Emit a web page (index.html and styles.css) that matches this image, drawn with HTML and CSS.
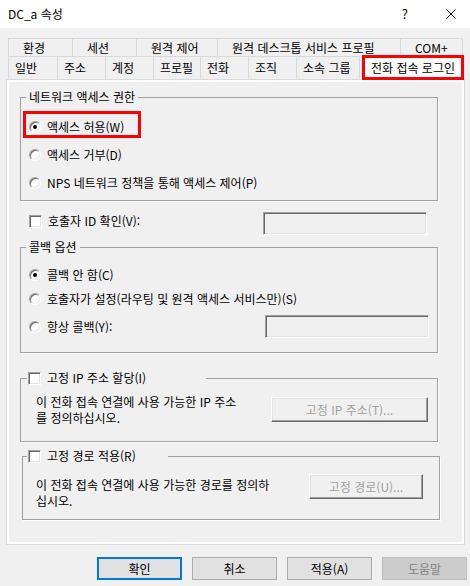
FILE: index.html
```html
<!DOCTYPE html>
<html lang="ko">
<head>
  <meta charset="UTF-8" />
  <title>DC_a 속성</title>
  <link rel="stylesheet" href="styles.css">
</head>
<body>
  <div class="window">
    <div class="titlebar">
      <span class="title">DC_a 속성</span>
      <span class="caption-help">?</span>
      <svg class="caption-close" viewBox="0 0 10 10" width="10" height="10">
        <path d="M0.5 0.5 L9.5 9.5 M9.5 0.5 L0.5 9.5" stroke="#000" stroke-width="1" fill="none"/>
      </svg>
    </div>

    <div class="tabs">
      <div class="tab-row row-back">
        <div class="tab">환경</div>
        <div class="tab">세션</div>
        <div class="tab">원격 제어</div>
        <div class="tab">원격 데스크톱 서비스 프로필</div>
        <div class="tab tab-last">COM+</div>
      </div>
      <div class="tab-row row-front">
        <div class="tab">일반</div>
        <div class="tab">주소</div>
        <div class="tab">계정</div>
        <div class="tab">프로필</div>
        <div class="tab">전화</div>
        <div class="tab">조직</div>
        <div class="tab tab-last">소속 그룹</div>
        <div class="tab tab-active">전화 접속 로그인</div>
      </div>
    </div>

    <div class="panel">
      <fieldset class="group group-access">
        <legend>네트워크 액세스 권한</legend>
        <div class="opt opt-marked"><span class="radio checked"></span>액세스 허용(W)</div>
        <div class="opt"><span class="radio"></span>액세스 거부(D)</div>
        <div class="opt"><span class="radio"></span>NPS 네트워크 정책을 통해 액세스 제어(P)</div>
      </fieldset>

      <div class="caller-row">
        <span class="caller-label"><span class="check"></span>호출자 ID 확인(V):</span>
        <span class="textbox"></span>
      </div>

      <fieldset class="group group-callback">
        <legend>콜백 옵션</legend>
        <div class="opt"><span class="radio checked"></span>콜백 안 함(C)</div>
        <div class="opt"><span class="radio"></span>호출자가 설정(라우팅 및 원격 액세스 서비스만)(S)</div>
        <div class="opt opt-box">
          <span class="opt-label"><span class="radio"></span>항상 콜백(Y):</span>
          <span class="textbox"></span>
        </div>
      </fieldset>

      <fieldset class="group group-ip">
        <legend><span class="check"></span>고정 IP 주소 할당(I)</legend>
        <div class="group-body">
          <p class="desc">이 전화 접속 연결에 사용 가능한 IP 주소<br>를 정의하십시오.</p>
          <button class="btn-classic" disabled>고정 IP 주소(T)...</button>
        </div>
      </fieldset>

      <fieldset class="group group-route">
        <legend><span class="check"></span>고정 경로 적용(R)</legend>
        <div class="group-body">
          <p class="desc">이 전화 접속 연결에 사용 가능한 경로를 정의하<br>십시오.</p>
          <button class="btn-classic" disabled>고정 경로(U)...</button>
        </div>
      </fieldset>
    </div>

    <div class="dialog-buttons">
      <button class="btn btn-default">확인</button>
      <button class="btn">취소</button>
      <button class="btn">적용(A)</button>
      <button class="btn btn-disabled" disabled>도움말</button>
    </div>
  </div>
</body>
</html>
```

FILE: styles.css
```css
body {
  margin: 0;
  background: #f0f0f0;
  font-family: "Noto Sans CJK KR", "Malgun Gothic", sans-serif;
  font-size: 12px;
  line-height: 16px;
  color: #000;
}

.window {
  width: 470px;
  height: 586px;
  overflow: hidden;
}

/* title bar */
.titlebar {
  height: 28px;
  background: #fff;
  display: flex;
  align-items: center;
  padding-left: 8px;
}

.title { flex: 1; }

.caption-help {
  font-size: 13px;
  margin-right: 38px;
}

.caption-close {
  display: block;
  margin-right: 14px;
}

/* tabs */
.tabs {
  margin: 10px 6px 0 8px;
}

.tab-row { display: grid; }

.row-back {
  height: 18px;
  grid-template-columns: 64px 64px 81px 183px 63px;
}

.row-front {
  height: 23px;
  grid-template-columns: 49px 48px 48px 47px 48px 48px 64px 104px;
  align-items: start;
}

.tab {
  box-sizing: border-box;
  border-top: 1px solid #d9d9d9;
  border-left: 1px solid #d9d9d9;
  white-space: nowrap;
}

.tab-last { border-right: 1px solid #d9d9d9; }

.row-back .tab {
  padding-left: 14px;
  line-height: 17px;
}

.row-front .tab {
  height: 23px;
  padding-left: 6px;
  line-height: 22px;
}

.row-front .tab-active {
  position: relative;
  z-index: 1;
  margin: -1px 0 0 2px;
  height: 25px;
  padding: 0;
  background: #fff;
  border: 3px solid #f00;
  text-align: center;
  line-height: 19px;
}

/* tab page */
.panel {
  margin-left: 6px;
  width: 459px;
  height: 466px;
  box-sizing: border-box;
  border: 1px solid #d9d9d9;
  box-shadow: inset 0 0 0 2px #fff;
  padding-top: 9px;
}

.group {
  margin: 0 0 0 13px;
  padding: 0;
  min-width: 0;
  width: 418px;
  box-sizing: border-box;
  border: 1px solid #a0a0a0;
  box-shadow: 1px 1px 0 #fff;
}

/* legend sits after the fieldset padding, so pull it back */
.group legend {
  padding: 0 3px;
  margin-left: -3px;
  line-height: 16px;
}

.opt {
  display: flex;
  align-items: center;
  white-space: nowrap;
}

.group-access { padding: 8px 0 3px 8px; }
.group-access .opt { height: 28px; }

.opt-marked { position: relative; }

.opt-marked::before {
  content: "";
  position: absolute;
  left: -6px;
  top: -2px;
  width: 118px;
  height: 27px;
  box-sizing: border-box;
  border: 3px solid #f00;
}

.caller-row {
  display: flex;
  align-items: flex-start;
  margin-top: 11px;
  padding-left: 22px;
  height: 23px;
}

.caller-label {
  display: flex;
  align-items: center;
  width: 234px;
  margin-top: 1px;
}

.group-callback {
  margin-top: 4px;
  padding: 8px 0 14px 8px;
}

.group-callback .opt { height: 24px; }

.group-callback .opt-box {
  margin-top: 4px;
  height: 23px;
}

.opt-label {
  display: flex;
  align-items: center;
  width: 236px;
}

.group-ip {
  margin-top: 17px;
  padding: 8px 0 15px 15px;
}

.group-route {
  margin: 6px 0 0 15px;
  padding: 10px 0 10px 13px;
}

.group-ip legend,
.group-route legend {
  display: flex;
  align-items: center;
  padding: 0 0 0 1px;
  margin-left: -9px;
  width: 178px;
}

.group-route legend {
  width: 140px;
}

.group-body {
  display: flex;
  align-items: flex-start;
}

.desc {
  margin: 0;
  white-space: nowrap;
}

.group-ip .desc { width: 235px; }
.group-ip .btn-classic { margin-top: 3px; width: 157px; }

.group-route .desc { width: 273px; margin-top: 3px; }
.group-route .btn-classic { width: 114px; }

/* controls */
.radio {
  position: relative;
  flex: none;
  width: 12px;
  height: 12px;
  box-sizing: border-box;
  margin-right: 6px;
  border-radius: 50%;
  background: #fff;
  border: 1px solid;
  border-color: #a0a0a0 #fff #fff #a0a0a0;
  box-shadow: inset 1px 1px 0 #696969, inset -1px -1px 0 #e3e3e3;
}

.radio.checked::after {
  content: "";
  position: absolute;
  left: 3px;
  top: 3px;
  width: 4px;
  height: 4px;
  border-radius: 50%;
  background: #000;
}

.check {
  flex: none;
  width: 13px;
  height: 13px;
  box-sizing: border-box;
  margin-right: 6px;
  background: #fff;
  border: 1px solid;
  border-color: #a0a0a0 #fff #fff #a0a0a0;
  box-shadow: inset 1px 1px 0 #696969, inset -1px -1px 0 #e3e3e3;
}

.textbox {
  display: block;
  width: 164px;
  height: 23px;
  box-sizing: border-box;
  background: #f0f0f0;
  border: 1px solid;
  border-color: #a0a0a0 #fff #fff #a0a0a0;
  box-shadow: inset 1px 1px 0 #696969, inset -1px -1px 0 #e3e3e3;
}

.btn-classic {
  height: 25px;
  padding: 0;
  font: inherit;
  color: #a0a0a0;
  background: #f0f0f0;
  border: 1px solid;
  border-color: #fff #696969 #696969 #fff;
  box-shadow: inset -1px -1px 0 #a0a0a0, inset 1px 1px 0 #e3e3e3;
}

/* dialog buttons */
.dialog-buttons {
  display: flex;
  justify-content: flex-end;
  gap: 10px;
  margin-top: 12px;
  padding-right: 3px;
}

.btn {
  width: 85px;
  height: 23px;
  box-sizing: border-box;
  padding: 0;
  font: inherit;
  color: #000;
  background: #e1e1e1;
  border: 1px solid #adadad;
}

.btn-default { border: 2px solid #0078d7; }

.btn-disabled {
  background: #cccccc;
  border-color: #bfbfbf;
  color: #838383;
}
```
